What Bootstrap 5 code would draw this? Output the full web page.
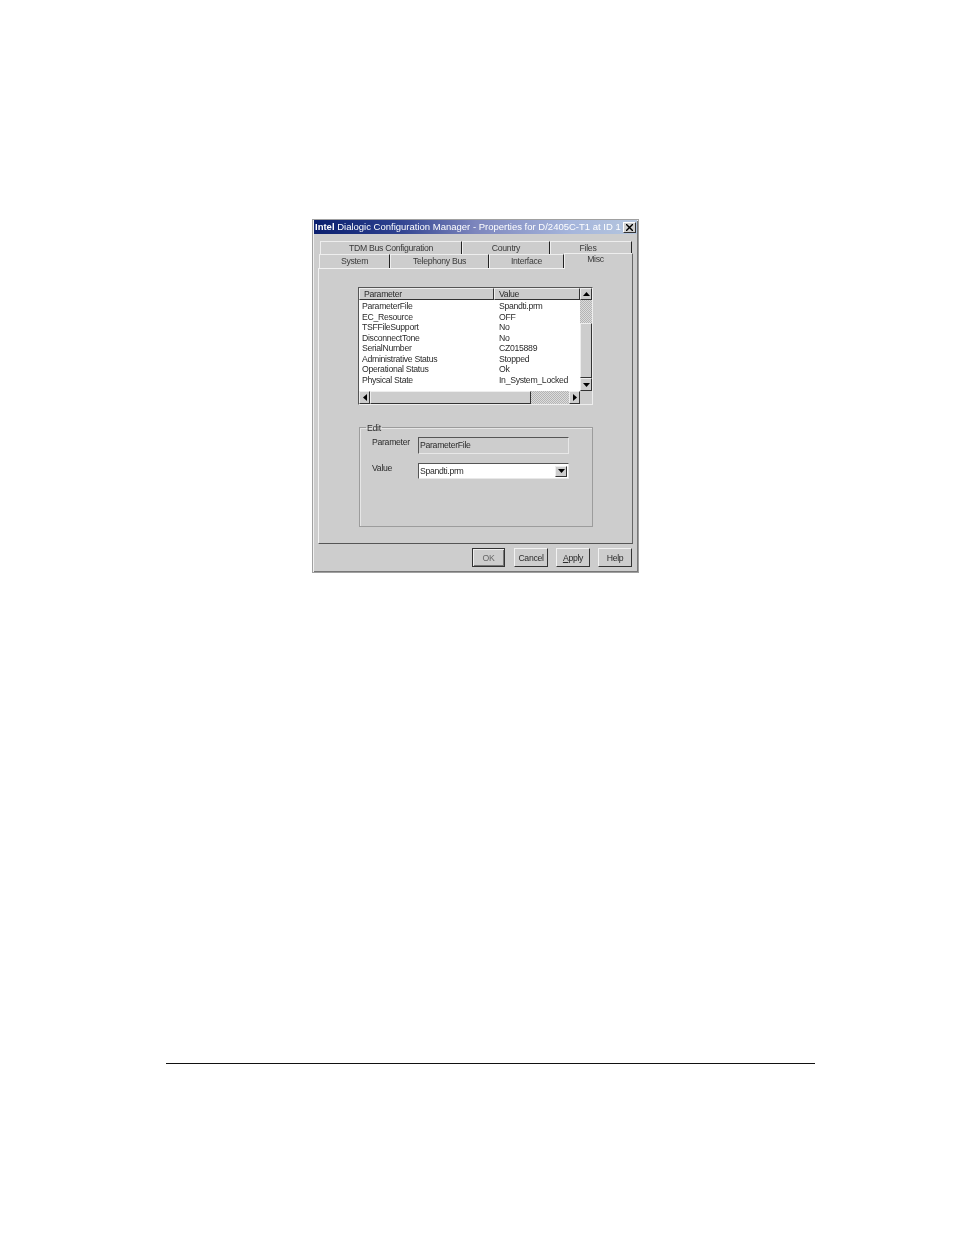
<!DOCTYPE html>
<html lang="en">
<head>
<meta charset="utf-8">
<title>Properties</title>
<link rel="stylesheet" href="https://cdn.jsdelivr.net/npm/bootstrap@5.3.0/dist/css/bootstrap.min.css">
<style>
body{background:#fff;font-family:"Liberation Sans",Arial,sans-serif;font-size:8.7px;letter-spacing:-.3px;line-height:10px;color:#2b2b2b}
.sheet{padding-top:219px}
.dlg{margin-left:312px;width:327px;height:354px;background:#cdcdcd;border:1px solid #a0a0a0;box-shadow:inset 1px 1px 0 #f2f2f2,inset -1px -1px 0 #777;filter:blur(.3px)}
.ttl{margin-left:1px;width:323px;height:14px;background:linear-gradient(90deg,#0a1f6e 0,#2c3f8e 25%,#7d86bd 50%,#a6b6dc 80%,#b5c6de 100%);color:#fff;font-size:9.5px;letter-spacing:0;line-height:14px;padding-left:1px;white-space:nowrap;overflow:hidden}
.ttl b{font-weight:700}
.xbtn{width:13px;height:11px;background:#d0d0d0;border:1px solid;border-color:#fff #333 #333 #fff;margin-right:1px;flex:none}
.tabrow{height:13px}
.r1{margin:7px 0 0 7px}
.r2{margin:0 0 0 6px;height:14px}
.tb{height:100%;background:#cdcdcd;border-top:1px solid #eee;border-left:1px solid #eee;border-right:1px solid #222;text-align:center;color:#3a3a3a;line-height:12px}
.r2 .tb{line-height:13px}
.r2 .tb.on{height:16px;margin-top:-1px;border-right-color:#666;position:relative;z-index:2;line-height:11px;padding-right:6px}
.t-tdm{width:142px}.t-cty{width:88px}.t-fil{width:82px;padding-right:6px}
.t-sys{width:71px}.t-tel{width:99px}.t-int{width:75px}.t-mis{width:69px}
.pnl{margin-left:5px;width:315px;height:276px;padding:18px 0 0 39px;border:1px solid;border-color:#f2f2f2 #666 #555 #f2f2f2}
.lst{width:235px;height:118px;border:1px solid;border-color:#555 #eee #eee #555}
.hd{height:12px;background:#cdcdcd}
.hc{border:1px solid;border-color:#eee #333 #333 #eee;padding-left:4px;line-height:11px}
.w-par{width:135px}.w-val{width:86px}
.sq{width:12px;background:#cdcdcd;border:1px solid;border-color:#eee #333 #333 #eee}
.sq-dn{height:13px}
.lb{height:91px}
.rows{width:221px;background:#fff;padding-top:1px}
.rw{height:10.5px;line-height:10.5px;white-space:nowrap}
.c1{width:140px;padding-left:3px}
.vbar{width:12px;background:#cdcdcd}
.dith{background:repeating-conic-gradient(#dcdcdc 0 25%,#b4b4b4 0 50%) 0 0/2px 2px}
.dv{height:23px}.dh{width:38px}
.fill{flex:1 1 0;background:#cdcdcd;border:1px solid;border-color:#eee #333 #333 #eee}
.hb{height:13px}
.hz{width:221px}
.sqh{width:11px;background:#cdcdcd;border:1px solid;border-color:#eee #333 #333 #eee}
.grp{margin:16px 0 0 1px;width:234px;height:106px;border:1px solid #9c9c9c;box-shadow:inset 1px 1px 0 #e6e6e6;padding:0 12px}
.grp legend{float:none;width:auto;font-size:8.7px;line-height:12px;margin:0 0 0 -6px;padding:1px 1px 0;color:#2b2b2b}
.fr1{margin-top:3px;height:17px}
.fr2{margin-top:9px;height:16px}
.lbl{width:46px;flex:none}
.fr1 .lbl{padding-top:0}
.fr2 .lbl{padding-top:0}
.ibox{width:151px;height:100%;border:1px solid;border-color:#555 #e8e8e8 #e8e8e8 #555;padding-left:1px;line-height:15px}
.sel{background:#fff}
.selb{width:12px;height:11px;background:#cdcdcd;border:1px solid;border-color:#eee #333 #333 #eee;margin-right:1px}
.acts{margin-top:4px;padding-right:6px}
.wbtn{width:34px;height:19px;font-size:8.7px;letter-spacing:-.3px;line-height:10px;padding:0;background:#cdcdcd;color:#2b2b2b;border:1px solid;border-color:#f2f2f2 #333 #333 #f2f2f2;border-radius:0}
.wbtn.dft{border-color:#333;box-shadow:inset 1px 1px 0 #eee,inset -1px -1px 0 #777;color:#666;width:33px}
.g9{margin-left:9px}.g8{margin-left:8px}
.rule{width:649px;margin:490px 0 0 166px;border-top:1px solid #111;height:0}
svg{display:block}
</style>
</head>
<body>
<div class="sheet">
<div class="dlg">
  <div class="ttl d-flex align-items-center justify-content-between">
    <div><b>Intel</b> Dialogic Configuration Manager - Properties for D/2405C-T1 at ID 1</div>
    <div class="xbtn d-flex align-items-center justify-content-center"><svg width="7" height="7" viewBox="0 0 7 7"><path d="M0 0L7 7M7 0L0 7" stroke="#000" stroke-width="1.4"/></svg></div>
  </div>
  <div class="tabrow r1 d-flex">
    <div class="tb t-tdm">TDM Bus Configuration</div>
    <div class="tb t-cty">Country</div>
    <div class="tb t-fil">Files</div>
  </div>
  <div class="tabrow r2 d-flex">
    <div class="tb t-sys">System</div>
    <div class="tb t-tel">Telephony Bus</div>
    <div class="tb t-int">Interface</div>
    <div class="tb t-mis on">Misc</div>
  </div>
  <div class="pnl">
    <div class="lst">
      <div class="hd d-flex">
        <div class="hc w-par">Parameter</div>
        <div class="hc w-val">Value</div>
        <div class="sq d-flex align-items-center justify-content-center"><svg width="7" height="4" viewBox="0 0 7 4"><path d="M3.5 0L7 4H0Z" fill="#000"/></svg></div>
      </div>
      <div class="lb d-flex">
        <div class="rows">
          <div class="rw d-flex"><div class="c1">ParameterFile</div><div>Spandti.prm</div></div>
          <div class="rw d-flex"><div class="c1">EC_Resource</div><div>OFF</div></div>
          <div class="rw d-flex"><div class="c1">TSFFileSupport</div><div>No</div></div>
          <div class="rw d-flex"><div class="c1">DisconnectTone</div><div>No</div></div>
          <div class="rw d-flex"><div class="c1">SerialNumber</div><div>CZ015889</div></div>
          <div class="rw d-flex"><div class="c1">Administrative Status</div><div>Stopped</div></div>
          <div class="rw d-flex"><div class="c1">Operational Status</div><div>Ok</div></div>
          <div class="rw d-flex"><div class="c1">Physical State</div><div>In_System_Locked</div></div>
        </div>
        <div class="vbar d-flex flex-column">
          <div class="dith dv"></div>
          <div class="fill"></div>
          <div class="sq sq-dn d-flex align-items-center justify-content-center"><svg width="7" height="4" viewBox="0 0 7 4"><path d="M0 0H7L3.5 4Z" fill="#000"/></svg></div>
        </div>
      </div>
      <div class="hb d-flex">
        <div class="hz d-flex">
          <div class="sqh d-flex align-items-center justify-content-center"><svg width="4" height="7" viewBox="0 0 4 7"><path d="M4 0V7L0 3.5Z" fill="#000"/></svg></div>
          <div class="fill"></div>
          <div class="dith dh"></div>
          <div class="sqh d-flex align-items-center justify-content-center"><svg width="4" height="7" viewBox="0 0 4 7"><path d="M0 0V7L4 3.5Z" fill="#000"/></svg></div>
        </div>
      </div>
    </div>
    <fieldset class="grp">
      <legend>Edit</legend>
      <div class="fr1 d-flex">
        <div class="lbl">Parameter</div>
        <div class="ibox">ParameterFile</div>
      </div>
      <div class="fr2 d-flex">
        <div class="lbl">Value</div>
        <div class="ibox sel d-flex align-items-center justify-content-between">
          <span>Spandti.prm</span>
          <span class="selb d-flex align-items-center justify-content-center"><svg width="7" height="4" viewBox="0 0 7 4"><path d="M0 0H7L3.5 4Z" fill="#000"/></svg></span>
        </div>
      </div>
    </fieldset>
  </div>
  <div class="acts d-flex justify-content-end">
    <button type="button" class="btn wbtn dft">OK</button>
    <button type="button" class="btn wbtn g9">Cancel</button>
    <button type="button" class="btn wbtn g8"><u>A</u>pply</button>
    <button type="button" class="btn wbtn g8">Help</button>
  </div>
</div>
<div class="rule"></div>
</div>
</body>
</html>
